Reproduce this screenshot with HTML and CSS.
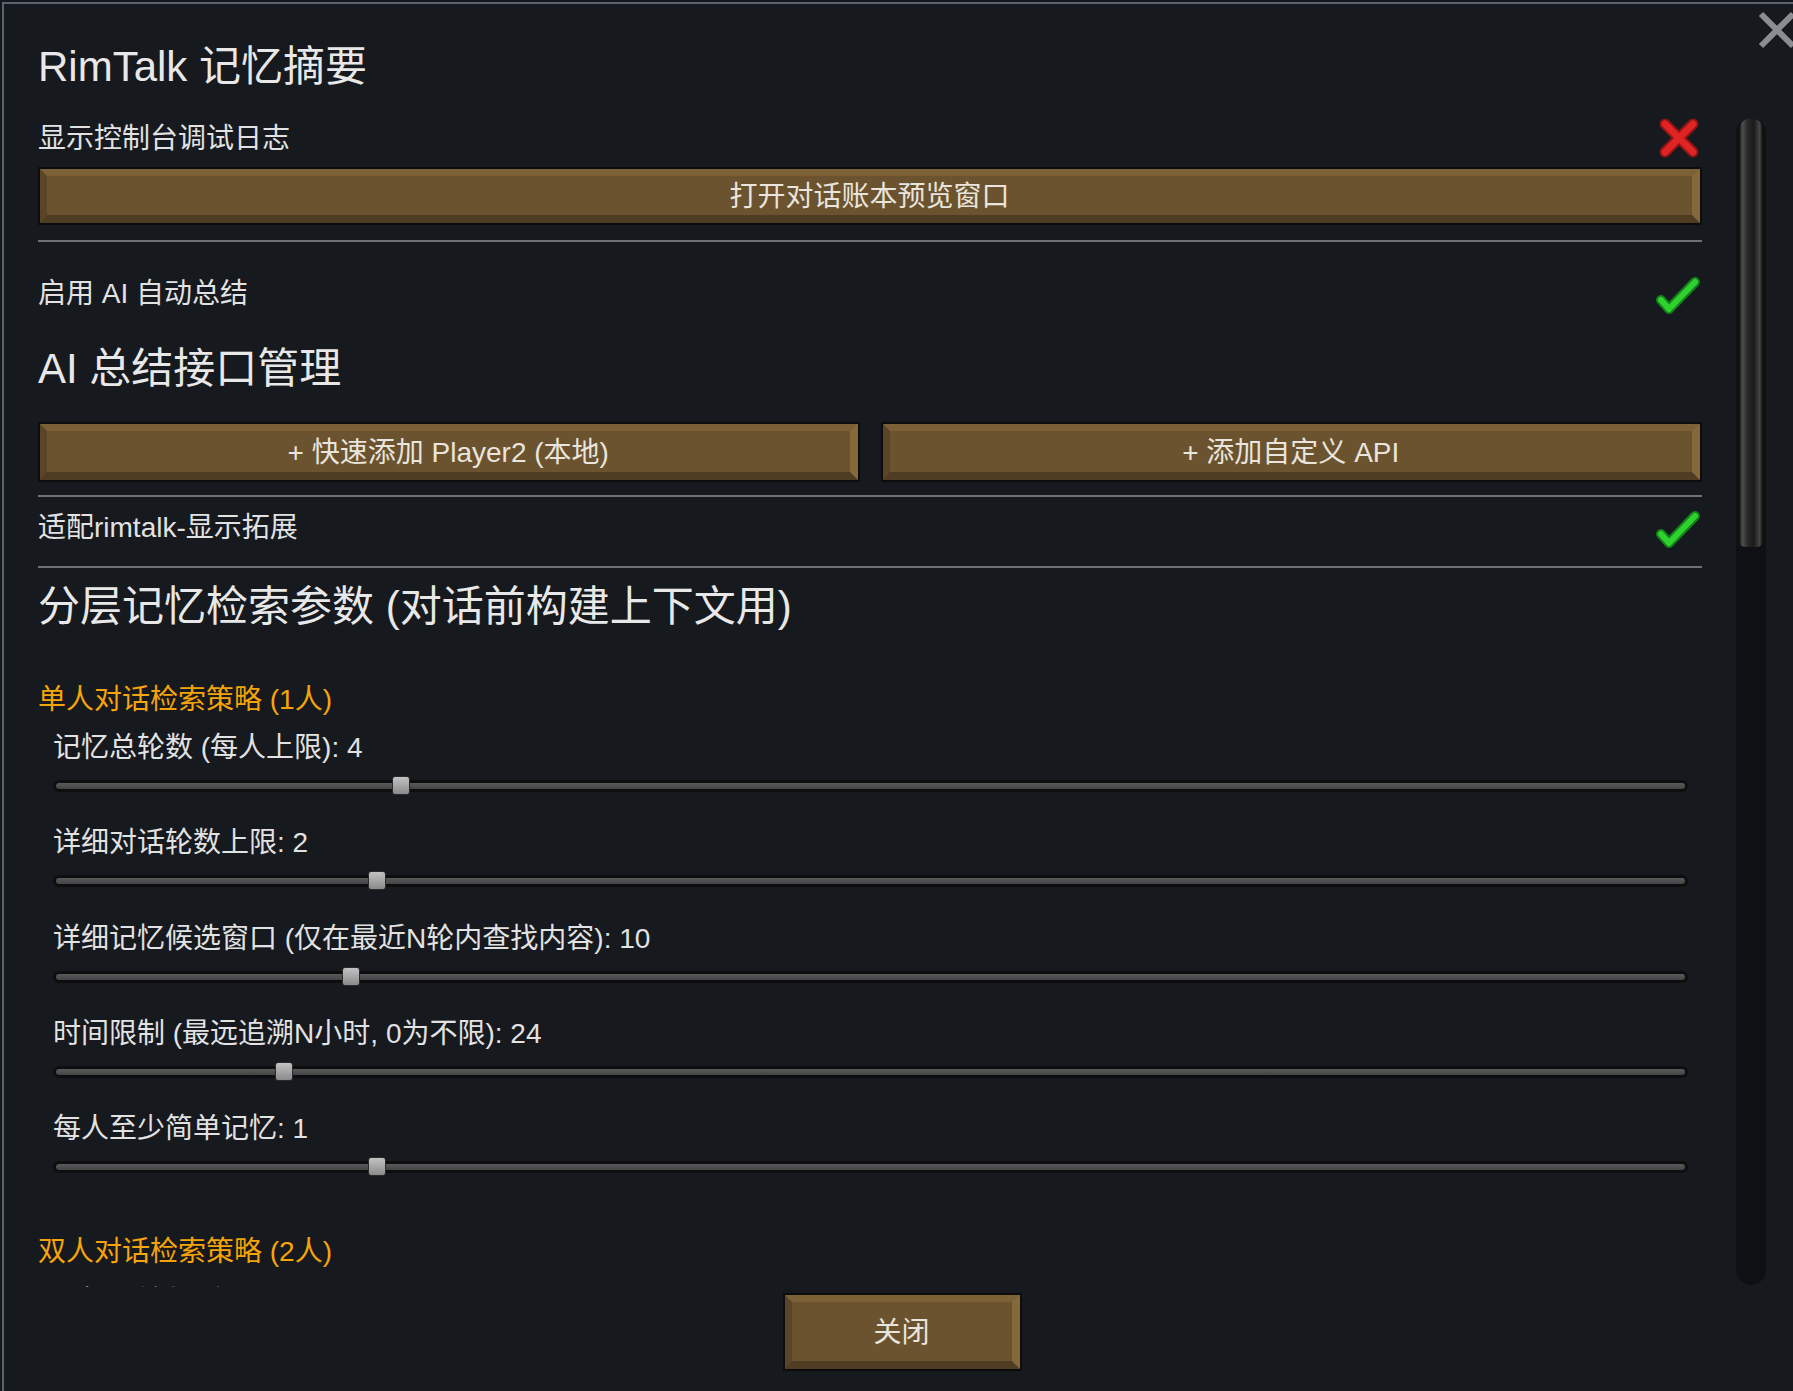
FILE: index.html
```html
<!DOCTYPE html>
<html>
<head>
    <meta charset="utf-8">
    <title>RimTalk 记忆摘要</title>
    <link rel="stylesheet" href="styles.css">
</head>
<body>
    <div class="window">
        <div class="close-x">
            <svg width="40" height="40" viewBox="0 0 40 40">
                <path d="M4 4 L36 36 M36 4 L4 36" stroke="#8a8d91" stroke-width="6" fill="none"/>
            </svg>
        </div>
        <h1 class="title">RimTalk 记忆摘要</h1>

        <div class="body">
            <div class="scroll-view">
                <div class="toggle-row first">
                    <span class="label">显示控制台调试日志</span>
                    <svg class="icon" width="44" height="42" viewBox="0 0 44 42">
                        <path d="M8 6 L36 34 M36 6 L8 34" stroke="#8c1414" stroke-width="11" stroke-linecap="round" fill="none"/>
                        <path d="M8 6 L36 34 M36 6 L8 34" stroke="#e02424" stroke-width="7" stroke-linecap="round" fill="none"/>
                    </svg>
                </div>
                <div class="btn wide"><div class="face">打开对话账本预览窗口</div></div>
                <div class="divider"></div>

                <div class="toggle-row">
                    <span class="label">启用 AI 自动总结</span>
                    <svg class="icon" width="46" height="40" viewBox="0 0 46 40">
                        <path d="M6 24 L14 33 L40 6" stroke="#13801a" stroke-width="10" stroke-linecap="round" stroke-linejoin="round" fill="none"/>
                        <path d="M6 24 L14 33 L40 6" stroke="#2ed12e" stroke-width="6" stroke-linecap="round" stroke-linejoin="round" fill="none"/>
                    </svg>
                </div>

                <h2 class="section-title">AI 总结接口管理</h2>
                <div class="btn-pair">
                    <div class="btn"><div class="face">+ 快速添加 Player2 (本地)</div></div>
                    <div class="btn"><div class="face">+ 添加自定义 API</div></div>
                </div>
                <div class="divider tight"></div>

                <div class="toggle-row third">
                    <span class="label">适配rimtalk-显示拓展</span>
                    <svg class="icon" width="46" height="40" viewBox="0 0 46 40">
                        <path d="M6 24 L14 33 L40 6" stroke="#13801a" stroke-width="10" stroke-linecap="round" stroke-linejoin="round" fill="none"/>
                        <path d="M6 24 L14 33 L40 6" stroke="#2ed12e" stroke-width="6" stroke-linecap="round" stroke-linejoin="round" fill="none"/>
                    </svg>
                </div>
                <div class="divider after-row"></div>

                <h2 class="section-title second">分层记忆检索参数 (对话前构建上下文用)</h2>

                <div class="sub-title">单人对话检索策略 (1人)</div>
                <div class="slider-group">
                    <div class="slider">
                        <div class="slider-label">记忆总轮数 (每人上限): 4</div>
                        <div class="track-wrap"><div class="track"></div><div class="handle" style="left: 21.3%"></div></div>
                    </div>
                    <div class="slider">
                        <div class="slider-label">详细对话轮数上限: 2</div>
                        <div class="track-wrap"><div class="track"></div><div class="handle" style="left: 19.8%"></div></div>
                    </div>
                    <div class="slider">
                        <div class="slider-label">详细记忆候选窗口 (仅在最近N轮内查找内容): 10</div>
                        <div class="track-wrap"><div class="track"></div><div class="handle" style="left: 18.2%"></div></div>
                    </div>
                    <div class="slider">
                        <div class="slider-label">时间限制 (最远追溯N小时, 0为不限): 24</div>
                        <div class="track-wrap"><div class="track"></div><div class="handle" style="left: 14.1%"></div></div>
                    </div>
                    <div class="slider">
                        <div class="slider-label">每人至少简单记忆: 1</div>
                        <div class="track-wrap"><div class="track"></div><div class="handle" style="left: 19.8%"></div></div>
                    </div>
                </div>

                <div class="sub-title second">双人对话检索策略 (2人)</div>
                <div class="slider-group">
                    <div class="slider next">
                        <div class="slider-label">记忆总轮数 (每人上限): 6</div>
                        <div class="track-wrap"><div class="track"></div><div class="handle" style="left: 30%"></div></div>
                    </div>
                </div>
            </div>

            <div class="scrollbar">
                <div class="thumb"></div>
            </div>
        </div>

        <div class="footer">
            <div class="btn close-btn"><div class="face">关闭</div></div>
        </div>
    </div>
</body>
</html>
```

FILE: styles.css
```css
html, body {
    margin: 0;
    height: 100%;
    overflow: hidden;
}
body {
    background-color: #15181d;
    font-family: "Liberation Sans", "Noto Sans CJK SC", sans-serif;
    color: #e2e2e2;
}
.window {
    position: relative;
    margin: 2px 0 0 2px;
    border-top: 2px solid #5b636d;
    border-left: 2px solid #5b636d;
    height: calc(100% - 4px);
    background-color: #16191e;
    padding-left: 34px;
}
.close-x {
    position: absolute;
    top: 6px;
    right: -4px;
    width: 40px;
    height: 40px;
}
.title {
    margin: 39px 0 0;
    font-size: 42px;
    line-height: 48px;
    font-weight: normal;
    color: #e8e8e8;
}
.body {
    display: flex;
    gap: 34px;
    margin-top: 27px;
}
.scroll-view {
    width: 1664px;
    height: 1169px;
    overflow: hidden;
}
.toggle-row {
    display: flex;
    justify-content: space-between;
    align-items: center;
    height: 40px;
    margin-top: 34px;
    font-size: 28px;
}
.toggle-row.first {
    height: 42px;
    margin-top: 0;
}
.toggle-row.first .label {
    padding-bottom: 1px;
}
.toggle-row.third {
    margin-top: 13px;
}
.toggle-row .label {
    line-height: 34px;
    padding-bottom: 5px;
}
.toggle-row .icon {
    margin-right: 1px;
}
.btn {
    box-sizing: border-box;
    border: 2px solid #0c0c0c;
    height: 60px;
}
.btn .face {
    box-sizing: border-box;
    height: 100%;
    border-style: solid;
    border-width: 7px 8px 8px 7px;
    border-color: #7c6136 #86693a #4e3c23 #5a4529;
    background-color: #6b5330;
    color: #e9e5dd;
    font-size: 28px;
    padding-bottom: 4px;
    display: flex;
    align-items: center;
    justify-content: center;
}
.btn.wide {
    height: 58px;
    margin-top: 7px;
}
.divider {
    height: 2px;
    background-color: #6f7174;
    margin-top: 15px;
}
.divider.tight {
    margin-top: 13px;
}
.divider.after-row {
    margin-top: 16px;
}
.section-title {
    margin: 29px 0 0;
    font-size: 42px;
    line-height: 48px;
    font-weight: normal;
    color: #e8e8e8;
}
.section-title.second {
    margin-top: 15px;
}
.btn-pair {
    display: flex;
    gap: 21px;
    margin-top: 29px;
}
.btn-pair .btn {
    flex: 1;
}
.sub-title {
    margin-top: 51px;
    font-size: 28px;
    line-height: 36px;
    color: #f5a40a;
}
.sub-title.second {
    margin-top: 57px;
}
.slider-group {
    padding: 0 14px 0 15px;
}
.slider {
    margin-top: 13px;
}
.slider + .slider {
    margin-top: 30.25px;
}
.slider.next {
    margin-top: 15px;
}
.slider-label {
    font-size: 28px;
    line-height: 34px;
}
.track-wrap {
    position: relative;
    height: 20px;
    margin-top: 11px;
}
.track {
    position: absolute;
    left: 0;
    right: 0;
    top: 4px;
    height: 12px;
    box-sizing: border-box;
    border: 3px solid #0d0e10;
    border-radius: 6px;
    background: linear-gradient(#5a5a5a, #444444);
}
.handle {
    position: absolute;
    top: 0;
    width: 18px;
    height: 19px;
    transform: translateX(-50%);
    box-sizing: border-box;
    border: 1px solid #2a2a2a;
    border-radius: 3px;
    background: linear-gradient(#c2c2c2, #8a8a8a);
}
.scrollbar {
    width: 30px;
    height: 1167px;
    border-radius: 15px;
    background-color: #0e1013;
}
.thumb {
    margin: 0 3px;
    height: 429px;
    border-radius: 12px 12px 6px 6px;
    background: linear-gradient(to right, #0b0b0b 0%, #4e4e4e 14%, #262626 38%, #1b1b1b 62%, #454545 86%, #0b0b0b 100%);
}
.footer {
    display: flex;
    justify-content: center;
    padding-right: 27px;
    margin-top: 6px;
}
.close-btn {
    width: 239px;
    height: 78px;
}
```
